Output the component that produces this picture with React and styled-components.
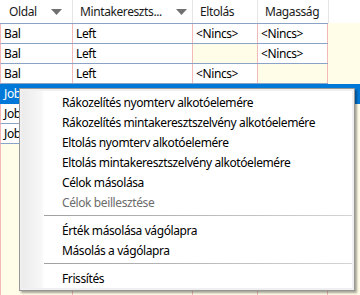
import React from "react";
import styled, { createGlobalStyle } from "styled-components";

const GlobalStyle = createGlobalStyle`
  html, body { margin: 0; padding: 0; overflow: hidden; background: #fffde8; }
  * { box-sizing: border-box; }
`;

const FONT = `"Noto Sans", "Open Sans", "Liberation Sans", sans-serif`;

const Screen = styled.div`
  position: relative;
  width: 360px;
  height: 295px;
  overflow: hidden;
  background: #fffde8;
  display: flex;
  flex-direction: column;
  font-family: ${FONT};
  font-size: 12px;
  letter-spacing: -0.4px;
  color: #000;
`;

const Header = styled.div`
  display: flex;
  height: 23px;
  background: #fff;
  flex-shrink: 0;
`;

const HeaderCell = styled.div`
  width: ${(p) => p.$w}px;
  flex-shrink: 0;
  display: flex;
  align-items: center;
  justify-content: space-between;
  padding: 0 ${(p) => p.$pr ?? 6}px 0 ${(p) => p.$pl ?? 7}px;
  border-right: 1px solid #e5e5e5;
  color: #1a1a1a;
  white-space: nowrap;
  overflow: hidden;
`;

const HeaderFill = styled.div`
  flex: 1;
`;

const Arrow = styled.svg`
  width: 11px;
  height: 6px;
  flex-shrink: 0;
  margin-top: 1px;
`;

const Body = styled.div`
  display: flex;
  flex-direction: column;
  flex: 1;
  border-top: 1px solid #8ba3c7;
  width: 328px;
`;

const Row = styled.div`
  display: flex;
  height: 20px;
  flex-shrink: 0;
  width: ${(p) => (p.$selected ? "360px" : "328px")};
  border-left: 1px solid ${(p) => (p.$selected ? "#0078d7" : "#f3b9b9")};
  border-bottom: 1px solid ${(p) => (p.$selected ? "#0078d7" : "#8ba3c7")};
  background: ${(p) => (p.$selected ? "#0078d7" : "transparent")};
`;

const Cell = styled.div`
  width: ${(p) => p.$w}px;
  flex-shrink: 0;
  display: flex;
  align-items: center;
  padding-left: 3px;
  white-space: nowrap;
  overflow: hidden;
  border-right: 1px solid ${(p) => (p.$selected ? "#0078d7" : "#f3b9b9")};
  background: ${(p) =>
    p.$selected ? "#0078d7" : p.$empty ? "#fffde8" : "#ffffff"};
  color: ${(p) => (p.$selected ? "#fff" : "#000")};
`;

const Filler = styled.div`
  display: flex;
  flex: 1;
  border-left: 1px solid #f3b9b9;
`;

const FillCell = styled.div`
  width: ${(p) => p.$w}px;
  flex-shrink: 0;
  border-right: 1px solid #f3b9b9;
`;

const Menu = styled.div`
  position: absolute;
  left: 19px;
  top: 88px;
  width: 336px;
  border: 1px solid #979797;
  background: #f0f0f0;
  padding: 2px;
  box-shadow: 2px 2px 2px rgba(0, 0, 0, 0.35);
`;

const MenuPanel = styled.div`
  display: flex;
  flex-direction: column;
  padding-top: 1px;
  background: linear-gradient(
    90deg,
    #ebebeb 0px,
    #f8f8f8 20px,
    #ffffff 22px
  );
`;

const MenuItem = styled.div`
  height: 20px;
  display: flex;
  align-items: center;
  padding-left: 40px;
  white-space: nowrap;
  color: ${(p) => (p.$disabled ? "#6d6d6d" : "#000")};
`;

const Separator = styled.div`
  height: 1px;
  margin: 3px 0 4px 22px;
  background: linear-gradient(90deg, #a0a0a0, #d4d4d4);
`;

const COLS = [72, 120, 65, 70];

const rows = [
  ["Bal", "Left", "<Nincs>", "<Nincs>"],
  ["Bal", "Left", "", "<Nincs>"],
  ["Bal", "Left", "<Nincs>", ""],
  ["Job", "", "", "", true],
  ["Job", "", "", ""],
  ["Job", "", "", ""],
];

const menu = [
  { t: "Rákozelítés nyomterv alkotóelemére" },
  { t: "Rákozelítés mintakeresztszelvény alkotóelemére" },
  { t: "Eltolás nyomterv alkotóelemére" },
  { t: "Eltolás mintakeresztszelvény alkotóelemére" },
  { t: "Célok másolása" },
  { t: "Célok beillesztése", d: true },
  { sep: true },
  { t: "Érték másolása vágólapra" },
  { t: "Másolás a vágólapra" },
  { sep: true },
  { t: "Frissítés" },
];

const DownArrow = () => (
  <Arrow viewBox="0 0 11 6">
    <polygon points="0,0 11,0 5.5,6" fill="#707070" />
  </Arrow>
);

export default function App() {
  return (
    <>
      <GlobalStyle />
      <Screen>
        <Header>
          <HeaderCell $w={73} $pl={9} $pr={10}>
            <span>Oldal</span>
            <DownArrow />
          </HeaderCell>
          <HeaderCell $w={120} $pr={5}>
            <span>Mintakereszts...</span>
            <DownArrow />
          </HeaderCell>
          <HeaderCell $w={65}>
            <span>Eltolás</span>
          </HeaderCell>
          <HeaderCell $w={71}>
            <span>Magasság</span>
          </HeaderCell>
          <HeaderFill />
        </Header>
        <Body>
          {rows.map((r, i) => {
            const sel = !!r[4];
            return (
              <Row key={i} $selected={sel}>
                {COLS.map((w, c) => (
                  <Cell
                    key={c}
                    $w={w}
                    $selected={sel}
                    $empty={c >= 2 && !r[c]}
                  >
                    {r[c]}
                  </Cell>
                ))}
              </Row>
            );
          })}
          <Filler>
            {COLS.map((w, c) => (
              <FillCell key={c} $w={w} />
            ))}
          </Filler>
        </Body>
        <Menu>
          <MenuPanel>
            {menu.map((m, i) =>
              m.sep ? (
                <Separator key={i} />
              ) : (
                <MenuItem key={i} $disabled={m.d}>
                  {m.t}
                </MenuItem>
              )
            )}
          </MenuPanel>
        </Menu>
      </Screen>
    </>
  );
}
